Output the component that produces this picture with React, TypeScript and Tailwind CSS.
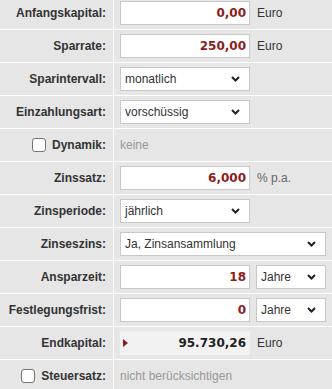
import type { ReactNode } from 'react'

const label = 'font-["Liberation_Sans",Arial,sans-serif] text-[12px] font-bold text-[#333]'
const value = 'font-["DejaVu_Sans",Verdana,sans-serif] text-[12px] font-bold'
const plain = 'font-["Liberation_Sans",Arial,sans-serif] text-[12px] text-[#333]'

function Chevron() {
  return (
    <svg width="9" height="6" viewBox="0 0 9 6" className="shrink-0">
      <polyline points="1,1 4.5,4.5 8,1" fill="none" stroke="#222" strokeWidth="2" />
    </svg>
  )
}

function Row({ name, check, children }: { name: string; check?: boolean; children: ReactNode }) {
  return (
    <div className="flex h-[33px] border-b border-white">
      <div className="flex w-[114px] shrink-0 items-center justify-end gap-[6px] border-r border-white pr-[7px]">
        {check && (
          <span className="h-[14px] w-[14px] rounded-[3px] border border-[#767676] bg-white" />
        )}
        <span className={label}>{name}:</span>
      </div>
      <div className="flex flex-1 items-center gap-[7px] pl-[6px]">{children}</div>
    </div>
  )
}

function Field({ v, w = 'w-[130px]' }: { v: string; w?: string }) {
  return (
    <div
      className={`flex h-[24px] ${w} items-center justify-end border border-[#c8c8c8] bg-white pr-[3px] ${value} text-[#8e1c1c]`}
    >
      {v}
    </div>
  )
}

function Select({ v, w = 'w-[130px]' }: { v: string; w?: string }) {
  return (
    <div
      className={`flex h-[24px] ${w} items-center justify-between border border-[#c8c8c8] bg-white pl-[4px] pr-[9px] ${plain} text-[#222]`}
    >
      <span>{v}</span>
      <Chevron />
    </div>
  )
}

export default function App() {
  return (
    <div className="h-[389px] w-[332px] overflow-hidden bg-[#e6e6e6]">
      <div className="-mt-[3px]">
        <Row name="Anfangskapital">
          <Field v="0,00" />
          <span className={plain}>Euro</span>
        </Row>
        <Row name="Sparrate">
          <Field v="250,00" />
          <span className={plain}>Euro</span>
        </Row>
        <Row name="Sparintervall">
          <Select v="monatlich" />
        </Row>
        <Row name="Einzahlungsart">
          <Select v="vorschüssig" />
        </Row>
        <Row name="Dynamik" check>
          <span className={`${plain} !text-[#999]`}>keine</span>
        </Row>
        <Row name="Zinssatz">
          <Field v="6,000" />
          <span className={`${plain} !text-[#666]`}>% p.a.</span>
        </Row>
        <Row name="Zinsperiode">
          <Select v="jährlich" />
        </Row>
        <Row name="Zinseszins">
          <Select v="Ja, Zinsansammlung" w="w-[206px]" />
        </Row>
        <Row name="Ansparzeit">
          <div className="flex gap-[6px]">
            <Field v="18" />
            <Select v="Jahre" w="w-[70px]" />
          </div>
        </Row>
        <Row name="Festlegungsfrist">
          <div className="flex gap-[6px]">
            <Field v="0" />
            <Select v="Jahre" w="w-[70px]" />
          </div>
        </Row>
        <Row name="Endkapital">
          <div className={`flex h-[24px] w-[130px] items-center justify-between bg-[#f2f2f2] pl-[3px] pr-[4px] ${value} text-[#222]`}>
            <svg width="5" height="8" viewBox="0 0 5 8">
              <polygon points="0,0 5,4 0,8" fill="#8e1c1c" />
            </svg>
            <span>95.730,26</span>
          </div>
          <span className={plain}>Euro</span>
        </Row>
        <Row name="Steuersatz" check>
          <span className={`${plain} !text-[#999]`}>nicht berücksichtigen</span>
        </Row>
      </div>
    </div>
  )
}
